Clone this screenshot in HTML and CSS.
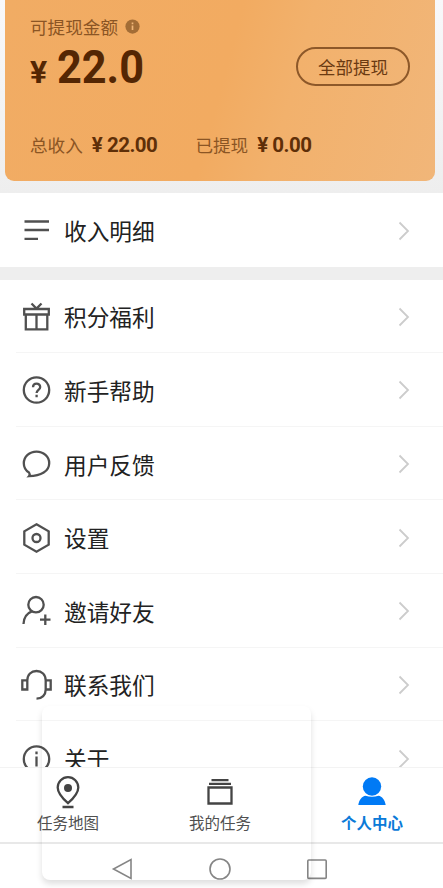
FILE: index.html
```
<!DOCTYPE html>
<html lang="zh-CN">
<head>
<meta charset="utf-8">
<meta name="viewport" content="width=device-width, initial-scale=1">
<title>个人中心</title>
<link rel="stylesheet" href="styles.css">
</head>
<body>
<div class="app">
  <main class="content">
    <section class="wallet">
      <div class="card">
        <div class="card-label">可提现金额
          <svg class="info" viewBox="0 0 16 16"><circle cx="8" cy="8" r="7.6" fill="#a36d36"/><path d="M8 6.8v5M8 3.7v1.8" stroke="#f0b678" stroke-width="1.8"/></svg>
        </div>
        <div class="balance-row">
          <div class="balance"><span class="yen">¥</span><span class="amount">22.0</span></div>
          <button class="withdraw">全部提现</button>
        </div>
        <div class="totals">
          <div class="total"><span>总收入</span><b>¥ 22.00</b></div>
          <div class="total"><span>已提现</span><b>¥ 0.00</b></div>
        </div>
      </div>
    </section>
    <section class="group">
      <a class="row"><svg class="icon" viewBox="0 0 32 32"><path d="M4.500 6.500h24.500M4.500 15h24.500M4.500 23.800h13.500"/></svg><span class="name">收入明细</span><svg class="arrow" viewBox="0 0 12 20"><path d="M1.500 1.500 10 10l-8.500 8.500"/></svg></a>
    </section>
    <section class="group">
      <a class="row"><svg class="icon" viewBox="0 0 32 32"><path d="M4.200 8h24.600v5.500H4.200zM5.800 13.500v14.800h21.500V13.500M16.500 13.500v14.800M11.500 2.500l5 5 5-5"/></svg><span class="name">积分福利</span><svg class="arrow" viewBox="0 0 12 20"><path d="M1.500 1.500 10 10l-8.500 8.500"/></svg></a>
      <a class="row"><svg class="icon" viewBox="0 0 32 32"><circle cx="16.500" cy="16" r="12.700"/><path d="M13 13.300c0-4.900 7.200-4.600 7.200-.4 0 3-3.600 2.800-3.600 6.100M16.600 20.800v2.500"/></svg><span class="name">新手帮助</span><svg class="arrow" viewBox="0 0 12 20"><path d="M1.500 1.500 10 10l-8.500 8.500"/></svg></a>
      <a class="row"><svg class="icon" viewBox="0 0 32 32"><path d="M9 24.500C5.600 22.500 3.800 19.300 3.800 15.300 3.800 8.500 9.500 3.600 16.500 3.600S29.200 8.600 29.200 15.200c0 7.800-8 12.800-20.200 13C9.800 27.300 9.900 26 9 24.500Z"/></svg><span class="name">用户反馈</span><svg class="arrow" viewBox="0 0 12 20"><path d="M1.500 1.500 10 10l-8.500 8.500"/></svg></a>
      <a class="row"><svg class="icon" viewBox="0 0 32 32"><path d="m16.500 2.300 12.200 7v13.400l-12.200 7-12.200-7V9.300z"/><circle cx="16.500" cy="16" r="4"/></svg><span class="name">设置</span><svg class="arrow" viewBox="0 0 12 20"><path d="M1.500 1.500 10 10l-8.500 8.500"/></svg></a>
      <a class="row"><svg class="icon" viewBox="0 0 32 32"><circle cx="16" cy="9.700" r="7.700"/><path d="M11.800 16.400C6.600 18.400 3.800 22.400 3.500 29M25.300 19.500v10.500M20 24.700h10.500"/></svg><span class="name">邀请好友</span><svg class="arrow" viewBox="0 0 12 20"><path d="M1.500 1.500 10 10l-8.500 8.500"/></svg></a>
      <a class="row"><svg class="icon" viewBox="0 0 32 32"><path d="M7.300 11.300H2.300v9.200h5zM25.700 11.300h5v9.200h-5zM7.300 11.500C7.300 5.500 11.300 2 16.500 2s9.200 3.500 9.200 9.500M25.700 20.500c0 5.500-3.700 9.200-9.200 9.200"/></svg><span class="name">联系我们</span><svg class="arrow" viewBox="0 0 12 20"><path d="M1.500 1.500 10 10l-8.500 8.500"/></svg></a>
      <a class="row"><svg class="icon" viewBox="0 0 32 32"><circle cx="16.500" cy="16" r="12.700"/><path d="M16.500 13.500v10M16.500 8.500v2.700"/></svg><span class="name">关于</span><svg class="arrow" viewBox="0 0 12 20"><path d="M1.500 1.500 10 10l-8.500 8.500"/></svg></a>
    </section>
  </main>
  <nav class="tabs">
    <a class="tab"><svg class="tab-icon" viewBox="0 0 32 34"><path d="M16 28.200C9.500 22.500 5.700 18 5.700 12.500a10.300 10.300 0 0 1 20.600 0c0 5.500-3.800 10-10.300 15.700ZM10.500 32h11"/><circle class="solid" cx="16" cy="13" r="4"/></svg><span>任务地图</span></a>
    <a class="tab"><svg class="tab-icon" viewBox="0 0 32 34"><path d="M4.500 12.500h23v16h-23zM5 8.900h22M7.500 5.200h17"/></svg><span>我的任务</span></a>
    <a class="tab active"><svg class="tab-icon" viewBox="0 0 32 34"><circle class="solid" cx="16" cy="11.500" r="9.200"/><path class="solid" d="M2.300 30C3 25 6 21.300 9.500 20.800c4.300 1.300 8.700 1.300 13 0 3.500.5 6.500 4.200 7.200 9.200z"/></svg><span>个人中心</span></a>
  </nav>
  <div class="system-nav">
    <svg viewBox="0 0 24 24"><path d="M21 2.500v19L3.500 12z"/></svg>
    <svg viewBox="0 0 24 24"><circle cx="12" cy="12" r="10"/></svg>
    <svg viewBox="0 0 24 24"><rect x="2.800" y="3" width="18.400" height="18.400" rx="1"/></svg>
  </div>
  <div class="floating-panel"></div>
</div>
</body>
</html>
```
FILE: styles.css
```
* { box-sizing: border-box; }
body {
  margin: 0;
  font-family: "Noto Sans CJK SC", sans-serif;
  color: #222;
  background: #fff;
}
.app {
  position: relative;
  height: 888px;
  display: flex;
  flex-direction: column;
  overflow: hidden;
}
.content {
  height: 767px;
  flex: none;
  overflow: hidden;
  background: #eee;
}
.wallet {
  height: 193px;
  padding: 0 8px 12px 5px;
  background: linear-gradient(#f8f8fa, #eee);
}
.card {
  height: 181px;
  padding: 14px 25px 0;
  border-radius: 0 0 9px 9px;
  background: linear-gradient(105deg, #f1ac64 0%, #f2ab61 50%, #f2b16c 65%, #f1b679 100%);
  color: #8b5524;
}
.card-label {
  display: flex;
  align-items: center;
  gap: 7px;
  height: 24px;
  font-size: 17.6px;
}
.info { width: 15px; height: 15px; }
.balance-row {
  display: flex;
  justify-content: space-between;
  height: 57px;
}
.balance {
  display: flex;
  align-items: baseline;
  font-family: Roboto, sans-serif;
  font-weight: 700;
  color: #542603;
  line-height: 58px;
}
.yen { width: 27px; font-size: 32px; }
.amount {
  font-size: 47px;
  transform: scaleX(.92);
  transform-origin: left;
}
.withdraw {
  width: 114px;
  height: 39px;
  margin-top: 9px;
  padding: 0;
  border: 2px solid #8d5829;
  border-radius: 20px;
  background: none;
  color: #6b3a12;
  font: 17.5px/34px "Noto Sans CJK SC", sans-serif;
}
.totals {
  display: flex;
  gap: 38px;
  margin-top: 37px;
  line-height: 26px;
  font-size: 17.6px;
}
.total { display: flex; gap: 9px; }
.total b {
  font-family: Roboto, sans-serif;
  font-size: 20.5px;
  letter-spacing: -.5px;
  color: #5f2f08;
}
.group { background: #fff; margin-bottom: 13px; }
.row {
  display: flex;
  align-items: center;
  height: 73.6px;
  margin-left: 16px;
  padding: 2px 33px 0 4px;
  border-bottom: 1px solid #f5f5f5;
}
.row:last-child { border-bottom: 0; }
.icon {
  width: 32px;
  height: 32px;
  fill: none;
  stroke: #505050;
  stroke-width: 2.3;
}
.name {
  flex: 1;
  margin-left: 12px;
  padding-top: 1px;
  font-size: 22.7px;
  line-height: 34px;
}
.arrow {
  width: 12px;
  height: 20px;
  fill: none;
  stroke: #ccc;
  stroke-width: 1.8;
}
.tabs {
  display: flex;
  height: 77px;
  flex: none;
  border-top: 1px solid #f3f3f3;
  border-bottom: 2px solid #e8e8e8;
  background: #fff;
}
.tab {
  flex: 0 0 152px;
  display: flex;
  flex-direction: column;
  align-items: center;
  padding-top: 7px;
  font-size: 15.5px;
  line-height: 22px;
  color: #505050;
}
.tab:first-child { flex-basis: 136px; margin-right: 8px; }
.tab-icon {
  width: 32px;
  height: 34px;
  margin-bottom: 2px;
  fill: none;
  stroke: #444;
  stroke-width: 2.3;
}
.solid { fill: #444; stroke: none; }
.active { color: #0a7ad8; font-weight: 700; }
.active .solid { fill: #007af5; }
.system-nav {
  display: flex;
  flex: 1;
  align-items: center;
  justify-content: space-between;
  padding: 5px 114px 0 110px;
}
.system-nav svg {
  width: 24px;
  height: 24px;
  fill: none;
  stroke: #858585;
  stroke-width: 1.6;
}
.floating-panel {
  position: absolute;
  left: 42px;
  top: 706px;
  width: 269px;
  height: 174px;
  border-radius: 8px;
  box-shadow: 0 4px 6px rgba(0, 0, 0, .13);
  pointer-events: none;
}
```
